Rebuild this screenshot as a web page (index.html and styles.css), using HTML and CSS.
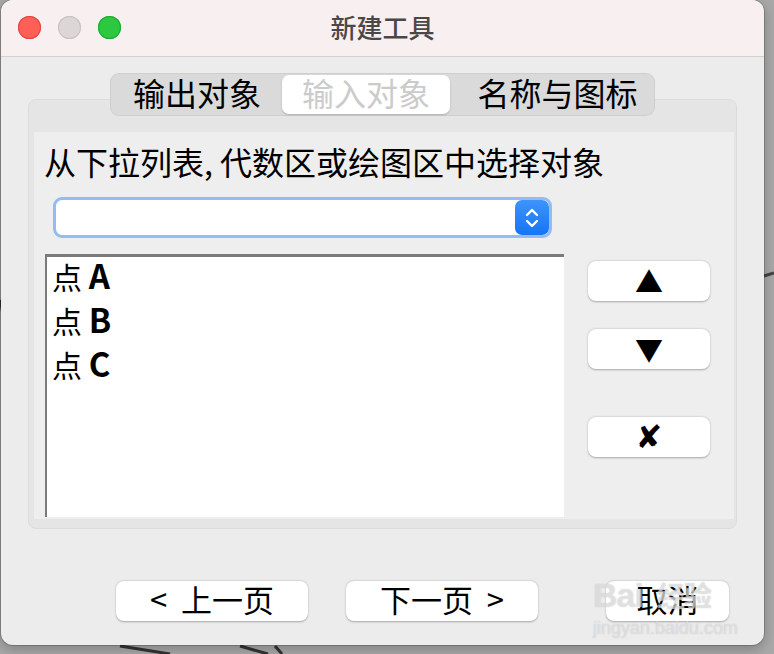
FILE: index.html
```html
<!DOCTYPE html>
<html lang="zh">
<head>
<meta charset="utf-8">
<link rel="stylesheet" href="styles.css">
<title>新建工具</title>
</head>
<body>
<svg class="backdrop" width="774" height="654" viewBox="0 0 774 654">
  <path d="M120 646 L170 654" stroke="#333" stroke-width="3" fill="none"/>
  <path d="M240 646 L268 654" stroke="#333" stroke-width="3" fill="none"/>
  <path d="M275 646 L282 654" stroke="#333" stroke-width="3" fill="none"/>
  <path d="M764 276 L774 273" stroke="#444" stroke-width="3" fill="none"/>
  <path d="M0 300 L2 312" stroke="#333" stroke-width="2" fill="none"/>
</svg>
<div class="window">
  <div class="titlebar">
    <div class="lights">
      <span class="light red"></span>
      <span class="light gray"></span>
      <span class="light green"></span>
    </div>
    <div class="title">新建工具</div>
  </div>
  <div class="body">
    <div class="tabs">
      <div class="seg">输出对象</div>
      <div class="seg seg-on">输入对象</div>
      <div class="seg seg-wide">名称与图标</div>
    </div>
    <div class="group">
      <div class="panel">
        <div class="label">从下拉列表, 代数区或绘图区中选择对象</div>
        <div class="combo">
          <div class="stepper">
            <svg width="16" height="24" viewBox="0 0 16 24">
              <path d="M3 9 L8 4 L13 9" stroke="#fff" stroke-width="2.4" fill="none" stroke-linecap="round" stroke-linejoin="round"/>
              <path d="M3 15 L8 20 L13 15" stroke="#fff" stroke-width="2.4" fill="none" stroke-linecap="round" stroke-linejoin="round"/>
            </svg>
          </div>
        </div>
        <div class="row">
          <div class="list">
            <div class="item">点 <b>A</b></div>
            <div class="item">点 <b>B</b></div>
            <div class="item">点 <b>C</b></div>
          </div>
          <div class="side">
            <div class="btn sbtn up">▲</div>
            <div class="btn sbtn down">▼</div>
            <div class="btn sbtn del">✘</div>
          </div>
        </div>
      </div>
    </div>
    <div class="footer">
      <div class="btn fbtn prev">&lt;&nbsp; 上一页</div>
      <div class="btn fbtn next">下一页&nbsp; &gt;</div>
      <div class="btn fbtn cancel">取消</div>
    </div>
  </div>
  <div class="watermark">
    <div class="wm-big">Bai<span>经验</span></div>
    <div class="wm-small">jingyan.baidu.com</div>
  </div>
</div>
</body>
</html>
```
FILE: styles.css
```css
* { box-sizing: border-box; }
html, body { margin: 0; padding: 0; }
body {
  width: 774px;
  height: 654px;
  background: #a9a9a9;
  overflow: hidden;
  position: relative;
  font-family: "Noto Sans CJK SC", "Noto Sans", sans-serif;
  color: #000;
}
.backdrop { position: absolute; left: 0; top: 0; }
.window {
  position: relative;
  margin-left: 1px;
  width: 763px;
  height: 645px;
  border-radius: 12px;
  background: #ececec;
  overflow: hidden;
  box-shadow: 0 0 0 1px rgba(0,0,0,0.18), 0 4px 14px rgba(0,0,0,0.25);
  display: flex;
  flex-direction: column;
}
.titlebar {
  height: 57px;
  flex: none;
  background: #f8eff0;
  border-bottom: 1px solid #d4d0d0;
  display: flex;
  align-items: center;
  justify-content: center;
  position: relative;
}
.lights {
  position: absolute;
  left: 17px;
  top: 16px;
  display: flex;
  gap: 17px;
}
.light {
  width: 23px;
  height: 23px;
  border-radius: 50%;
  display: block;
}
.red { background: #fe5f57; box-shadow: inset 0 0 0 1px #e2463f; }
.gray { background: #ddd6d7; box-shadow: inset 0 0 0 1px #c9c0c1; }
.green { background: #2bc840; box-shadow: inset 0 0 0 1px #1faa33; }
.title {
  font-size: 26px;
  font-weight: 500;
  color: #4b4748;
  line-height: 1;
  margin-top: -3px;
}
.body {
  flex: 1;
  display: flex;
  flex-direction: column;
  padding-top: 16px;
}
.tabs {
  align-self: center;
  position: relative;
  z-index: 1;
  display: flex;
  height: 43px;
  padding: 2px;
  background: #dadada;
  border-radius: 9px;
  box-shadow: inset 0 0 0 1px rgba(0,0,0,0.05);
}
.seg {
  width: 170px;
  display: flex;
  align-items: center;
  justify-content: center;
  font-size: 32px;
  line-height: 1;
  padding-bottom: 6px;
  color: #000;
}
.seg-on {
  width: 168px;
  background: #fff;
  border-radius: 7px;
  color: #cbcbcb;
  box-shadow: 0 1px 2px rgba(0,0,0,0.2);
}
.seg-wide { width: 203px; padding-left: 12px; }
.group {
  margin: -17px 27px 0;
  height: 430px;
  background: #e5e5e5;
  border: 1px solid #dcdcdc;
  border-radius: 8px;
  padding: 32px 2px 9px 5px;
  display: flex;
}
.panel {
  flex: 1;
  background: #eeeeee;
  padding-top: 10px;
  display: flex;
  flex-direction: column;
}
.label {
  font-size: 32px;
  line-height: 38px;
  height: 44px;
  padding-left: 10px;
  white-space: nowrap;
}
.combo {
  margin: 11px 0 0 19px;
  width: 499px;
  height: 41px;
  background: #fff;
  border: 3px solid #93bdf2;
  border-radius: 9px;
  display: flex;
  justify-content: flex-end;
  align-items: center;
}
.stepper {
  width: 34px;
  height: 35px;
  border-radius: 7px;
  background: linear-gradient(#3f94fb, #1574f6);
  display: flex;
  align-items: center;
  justify-content: center;
}
.row {
  display: flex;
  margin-top: 16px;
  padding-left: 11px;
}
.list {
  width: 519px;
  height: 263px;
  background: #fff;
  border-top: 3px solid #7b7b7b;
  border-left: 2px solid #7b7b7b;
  padding: 0 0 0 5px;
}
.item {
  font-size: 30px;
  line-height: 36px;
  height: 44px;
  white-space: nowrap;
}
.item b {
  font-size: 33px;
  font-weight: 700;
}
.side {
  margin-left: 24px;
  padding-top: 7px;
  display: flex;
  flex-direction: column;
}
.btn {
  background: #fff;
  border-radius: 8px;
  box-shadow: 0 0.5px 2px rgba(0,0,0,0.3);
  display: flex;
  align-items: center;
  justify-content: center;
  line-height: 1;
  white-space: nowrap;
}
.sbtn {
  width: 122px;
  height: 40px;
  font-size: 28px;
}
.down { margin-top: 28px; }
.del { margin-top: 48px; font-size: 32px; font-family: "DejaVu Sans", sans-serif; font-weight: 700; }
.footer {
  display: flex;
  margin-top: 52px;
  padding-left: 115px;
}
.fbtn {
  height: 40px;
  font-size: 31px;
  width: 192px;
  padding-bottom: 6px;
}
.next { margin-left: 38px; }
.cancel { margin-left: 68px; width: 123px; }
.watermark {
  position: absolute;
  left: 592px;
  top: 578px;
  pointer-events: none;
  color: rgba(255,255,255,0.5);
  text-shadow: 0 0 1px rgba(140,140,140,0.55);
  font-family: "Liberation Sans", sans-serif;
}
.wm-big { font-size: 34px; font-weight: 700; line-height: 1; letter-spacing: -1px; }
.wm-big span { font-family: "Noto Sans CJK SC", sans-serif; font-size: 28px; margin-left: 14px; }
.wm-small { font-size: 18px; line-height: 1; margin-top: 7px; }
```
